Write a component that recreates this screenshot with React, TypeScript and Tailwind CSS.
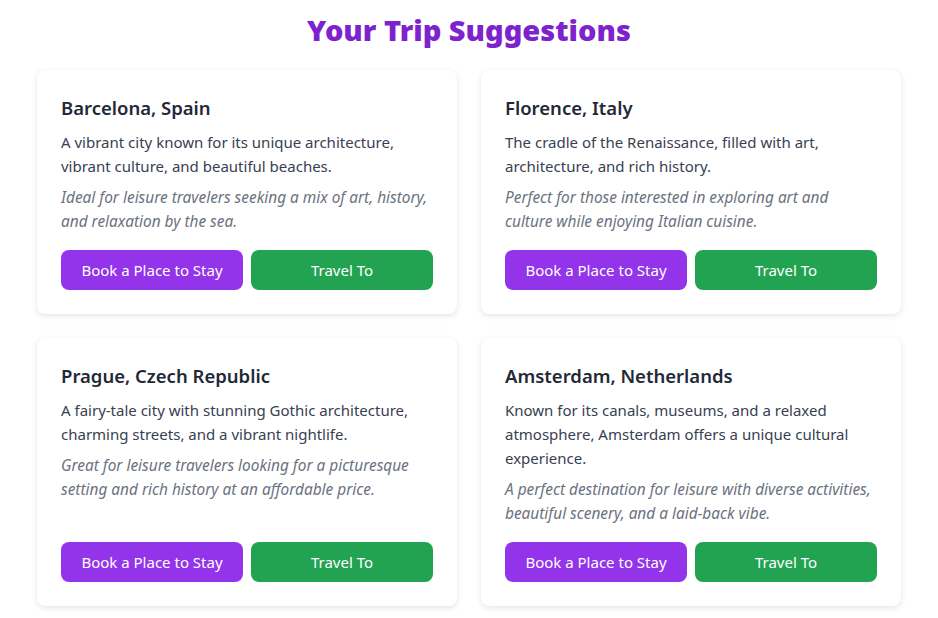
import React from "react";

const trips = [
  {
    city: "Barcelona, Spain",
    description:
      "A vibrant city known for its unique architecture, vibrant culture, and beautiful beaches.",
    note: "Ideal for leisure travelers seeking a mix of art, history, and relaxation by the sea.",
  },
  {
    city: "Florence, Italy",
    description:
      "The cradle of the Renaissance, filled with art, architecture, and rich history.",
    note: "Perfect for those interested in exploring art and culture while enjoying Italian cuisine.",
  },
  {
    city: "Prague, Czech Republic",
    description:
      "A fairy-tale city with stunning Gothic architecture, charming streets, and a vibrant nightlife.",
    note: "Great for leisure travelers looking for a picturesque setting and rich history at an affordable price.",
  },
  {
    city: "Amsterdam, Netherlands",
    description:
      "Known for its canals, museums, and a relaxed atmosphere, Amsterdam offers a unique cultural experience.",
    note: "A perfect destination for leisure with diverse activities, beautiful scenery, and a laid-back vibe.",
  },
];

export default function App() {
  return (
    <div className="min-h-screen bg-white font-['Noto_Sans',sans-serif]">
      <div className="max-w-4xl mx-auto px-4 pt-3 pb-6">
        <h1 className="text-[29px] leading-9 font-black text-center text-[#7e22ce] mb-[22px]">
          Your Trip Suggestions
        </h1>

        <div className="grid grid-cols-2 gap-6">
          {trips.map((trip) => (
            <div
              key={trip.city}
              className="flex flex-col bg-white rounded-lg shadow-[0_2px_6px_rgba(0,0,0,0.1),0_0_1px_rgba(0,0,0,0.06)] p-6"
            >
              <h2 className="text-[18.5px] leading-7 font-semibold text-[#1f2937] mb-2">
                {trip.city}
              </h2>
              <p className="text-[15px] leading-6 text-[#374151] mb-2">
                {trip.description}
              </p>
              <p className="text-[15.4px] leading-6 text-[#6b7280] italic">
                {trip.note}
              </p>

              {/* Actions */}
              <div className="flex gap-2 mt-auto pt-4">
                <button className="flex-1 h-10 rounded-lg bg-[#9333ea] text-white text-[15px] hover:bg-[#7e22ce]">
                  Book a Place to Stay
                </button>
                <button className="flex-1 h-10 rounded-lg bg-[#22a352] text-white text-[15px] hover:bg-[#15803d]">
                  Travel To
                </button>
              </div>
            </div>
          ))}
        </div>
      </div>
    </div>
  );
}
